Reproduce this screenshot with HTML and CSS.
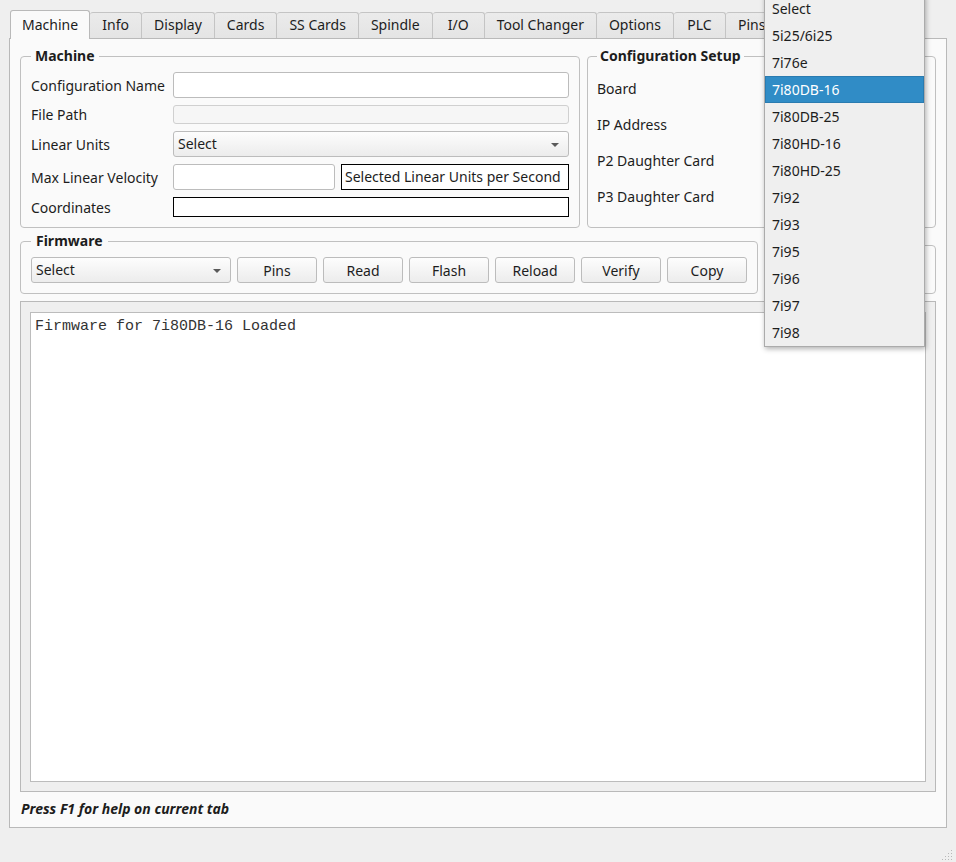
FILE: index.html
```html
<!DOCTYPE html>
<html lang="en">
<head>
  <meta charset="UTF-8" />
  <title>Mesa Configuration Tool</title>
  <link rel="stylesheet" href="styles.css">
</head>
<body>

  <div class="window">

    <div class="tabs">
      <div class="tab active">Machine</div>
      <div class="tab">Info</div>
      <div class="tab">Display</div>
      <div class="tab">Cards</div>
      <div class="tab">SS Cards</div>
      <div class="tab">Spindle</div>
      <div class="tab">I/O</div>
      <div class="tab">Tool Changer</div>
      <div class="tab">Options</div>
      <div class="tab">PLC</div>
      <div class="tab">Pins</div>
    </div>

    <div class="pane">

      <div class="top-row">
        <fieldset class="group machine">
          <legend>Machine</legend>
          <div class="form-grid">
            <label>Configuration Name</label>
            <div class="field"></div>
            <label>File Path</label>
            <div class="field short disabled"></div>
            <label>Linear Units</label>
            <div class="combo">Select<span class="arrow"></span></div>
            <label>Max Linear Velocity</label>
            <div class="split">
              <div class="field"></div>
              <div class="plain-box">Selected Linear Units per Second</div>
            </div>
            <label>Coordinates</label>
            <div class="plain-box short"></div>
          </div>
        </fieldset>

        <fieldset class="group setup">
          <legend>Configuration Setup</legend>
          <div class="setup-grid">
            <label>Board</label>
            <label>IP Address</label>
            <label>P2 Daughter Card</label>
            <label>P3 Daughter Card</label>
          </div>
        </fieldset>
      </div>

      <div class="fw-row">
        <fieldset class="group firmware">
          <legend>Firmware</legend>
          <div class="fw-controls">
            <div class="combo fw-combo">Select<span class="arrow"></span></div>
            <button type="button">Pins</button>
            <button type="button">Read</button>
            <button type="button">Flash</button>
            <button type="button">Reload</button>
            <button type="button">Verify</button>
            <button type="button">Copy</button>
          </div>
        </fieldset>
        <fieldset class="group spare"></fieldset>
      </div>

      <div class="output">
        <div class="output-text">Firmware for 7i80DB-16 Loaded</div>
      </div>

      <div class="help">Press F1 for help on current tab</div>

    </div>

    <!-- open board list -->
    <ul class="popup">
      <li>Select</li>
      <li>5i25/6i25</li>
      <li>7i76e</li>
      <li class="selected">7i80DB-16</li>
      <li>7i80DB-25</li>
      <li>7i80HD-16</li>
      <li>7i80HD-25</li>
      <li>7i92</li>
      <li>7i93</li>
      <li>7i95</li>
      <li>7i96</li>
      <li>7i97</li>
      <li>7i98</li>
    </ul>

    <svg class="grip" width="12" height="12" viewBox="0 0 12 12">
      <g fill="#b8b8b8">
        <rect x="9" y="1" width="1" height="1"/>
        <rect x="6" y="4" width="1" height="1"/>
        <rect x="9" y="4" width="1" height="1"/>
        <rect x="3" y="7" width="1" height="1"/>
        <rect x="6" y="7" width="1" height="1"/>
        <rect x="9" y="7" width="1" height="1"/>
        <rect x="0" y="10" width="1" height="1"/>
        <rect x="3" y="10" width="1" height="1"/>
        <rect x="6" y="10" width="1" height="1"/>
        <rect x="9" y="10" width="1" height="1"/>
      </g>
    </svg>

  </div>

</body>
</html>
```

FILE: styles.css
```css
/* Fusion-like light theme */
* {
  box-sizing: border-box;
}
body {
  margin: 0;
  background-color: #efefef;
  color: #1d1d1d;
  font-family: "Noto Sans", "DejaVu Sans", sans-serif;
  font-size: 14px;
}
.window {
  position: relative;
  width: 956px;
  height: 862px;
  overflow: hidden;
}

/* tabs */
.tabs {
  display: flex;
  margin-left: 10px;
  padding-top: 10px;
  height: 38px;
  position: relative;
  z-index: 1;
}
.tab {
  margin-top: 2px;
  padding: 0 12px;
  min-width: 52px;
  text-align: center;
  height: 26px;
  line-height: 24px;
  background: linear-gradient(#ebebeb, #e4e4e4);
  border: 1px solid #c4c4c4;
  border-left: none;
  border-bottom: none;
  border-radius: 3px 3px 0 0;
}
.tab.active {
  margin-top: 0;
  padding: 0 11px;
  height: 29px;
  line-height: 28px;
  background: #fafafa;
  border: 1px solid #b9b9b9;
  border-bottom: none;
}

/* main pane */
.pane {
  margin: 0 9px;
  height: 790px;
  background-color: #fafafa;
  border: 1px solid #b9b9b9;
  padding: 8px 10px 0;
  display: flex;
  flex-direction: column;
}

.group {
  margin: 0;
  border: 1px solid #c0c0c0;
  border-radius: 4px;
  padding: 7px 10px 10px;
  min-width: 0;
}
.group legend {
  padding: 0 4px;
  font-weight: 700;
  line-height: 18px;
}

.top-row {
  display: flex;
  gap: 7px;
}
.machine {
  width: 560px;
}
.setup {
  flex: 1;
  padding-left: 9px;
}
.setup legend {
  padding: 0 3px;
}

.form-grid {
  display: grid;
  grid-template-columns: 142px 1fr;
  row-gap: 7px;
  align-items: center;
}
.setup-grid {
  display: grid;
  grid-auto-rows: 26px;
  row-gap: 10px;
  align-items: center;
  padding-top: 3px;
}

.field {
  height: 26px;
  background: #fff;
  border: 1px solid #bcbcbc;
  border-radius: 3px;
}
.field.short {
  height: 19px;
}
.field.disabled {
  background: #f6f6f6;
  border-color: #d0d0d0;
}
.split {
  display: flex;
  gap: 6px;
}
.split .field {
  width: 162px;
}
.plain-box {
  flex: 1;
  height: 26px;
  line-height: 24px;
  padding: 0 3px;
  border: 1px solid #000;
  background: #fff;
  white-space: nowrap;
}
.plain-box.short {
  height: 20px;
}

.combo {
  position: relative;
  height: 26px;
  line-height: 24px;
  padding: 0 4px;
  border: 1px solid #bcbcbc;
  border-radius: 3px;
  background: linear-gradient(#fdfdfd, #ececec);
}
.arrow {
  position: absolute;
  right: 9px;
  top: 11px;
  width: 0;
  height: 0;
  border-left: 4px solid transparent;
  border-right: 4px solid transparent;
  border-top: 4px solid #5a5a5a;
}

/* firmware row */
.fw-row {
  display: flex;
  gap: 9px;
  margin-top: 4px;
}
.firmware {
  width: 738px;
  padding: 7px 10px 10px;
}
.firmware legend {
  padding: 0 5px;
}
.spare {
  flex: 1;
  margin-top: 13px;
}
.fw-controls {
  display: flex;
  gap: 6px;
}
.fw-combo {
  width: 200px;
}
button {
  width: 80px;
  height: 26px;
  padding: 0;
  font: inherit;
  color: inherit;
  border: 1px solid #bcbcbc;
  border-radius: 3px;
  background: linear-gradient(#fdfdfd, #ececec);
}

/* log output */
.output {
  flex: 1;
  margin-top: 7px;
  border: 1px solid #b9b9b9;
  background: #efefef;
  padding: 10px 9px 9px;
  display: flex;
}
.output-text {
  flex: 1;
  background: #fff;
  border: 1px solid #bcbcbc;
  padding: 4px 4px;
  font-family: "Liberation Mono", "Courier New", monospace;
  font-size: 15px;
  line-height: 20px;
  color: #333;
}

.help {
  padding: 7px 1px 8px;
  font-weight: 700;
  font-style: italic;
  line-height: 20px;
}

/* popup list */
.popup {
  position: absolute;
  left: 764px;
  top: -6px;
  width: 161px;
  margin: 0;
  padding: 0;
  list-style: none;
  background: #efefef;
  border: 1px solid #ababab;
  box-shadow: 1px 2px 5px rgba(0, 0, 0, 0.3);
  z-index: 5;
}
.popup li {
  height: 27px;
  line-height: 27px;
  padding-left: 7px;
}
.popup li.selected {
  background: #308cc6;
  color: #fff;
  border: 1px solid #2a7bb0;
  line-height: 25px;
  padding-left: 6px;
}

.grip {
  position: absolute;
  right: 2px;
  bottom: 1px;
}
```
